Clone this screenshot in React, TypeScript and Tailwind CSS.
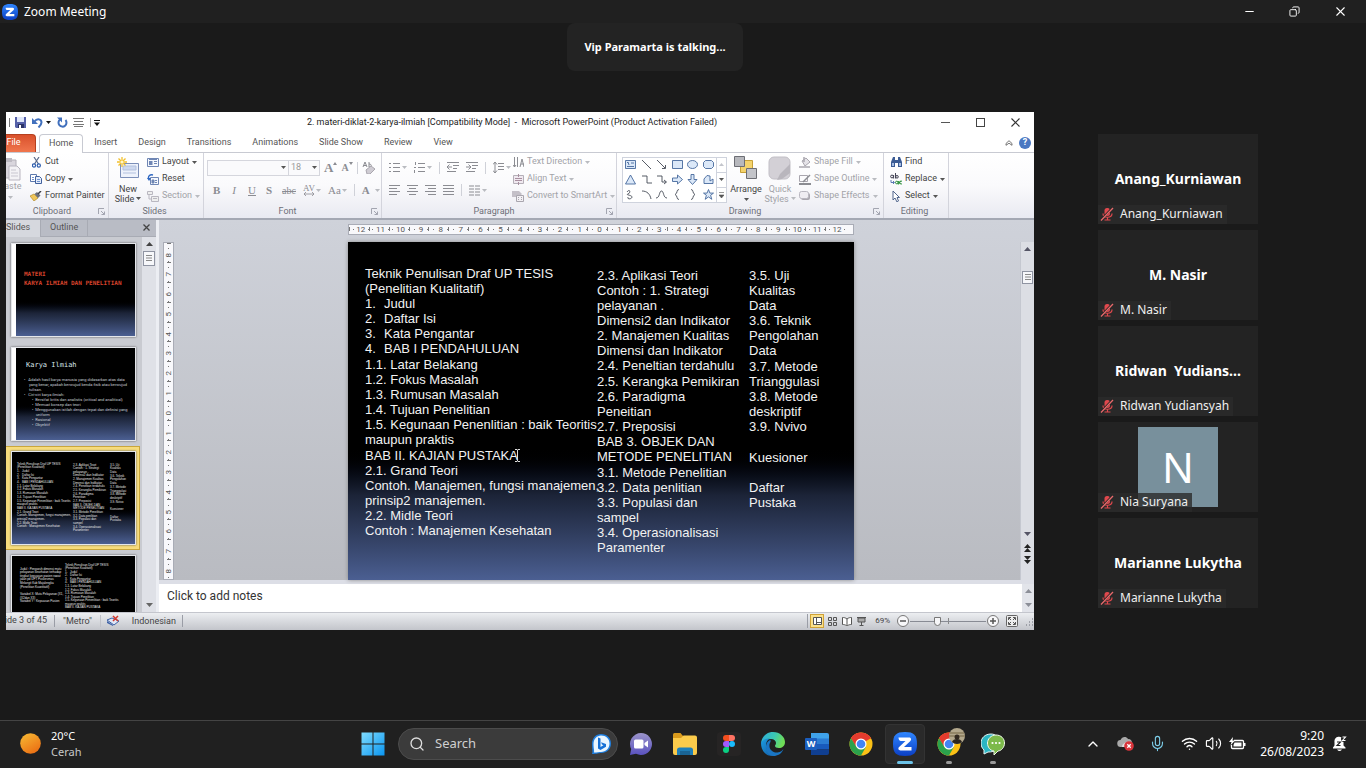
import React from 'react';
import { ChevronUp, Minus, X, Copy as Restore, Search, Wifi, Volume2, Mic } from 'lucide-react';

type Kids = { children?: React.ReactNode };

function Svg({ w, h, vb, className = '', children }: Kids & { w: number; h: number; vb?: string; className?: string }) {
  return (
    <svg width={w} height={h} viewBox={vb ?? `0 0 ${w} ${h}`} fill="none" className={`shrink-0 ${className}`} aria-hidden="true">
      {children}
    </svg>
  );
}

function Caret({ dim = false }: { dim?: boolean }) {
  return (
    <Svg w={5} h={3}>
      <path d="M0 0h5L2.500 3z" fill={dim ? '#b9bbc0' : '#555'} />
    </Svg>
  );
}

const VSep = () => <span className="h-3 w-px shrink-0 bg-[#cfd1d8]" />;

/* ---------- Zoom window ---------- */

function ZoomLogo({ size }: { size: number }) {
  return (
    <Svg w={size} h={size} vb="0 0 24 24">
      <defs>
        <linearGradient id="zg" x1="0" y1="0" x2="0" y2="1">
          <stop offset="0" stopColor="#2f86ff" />
          <stop offset="1" stopColor="#0b3fc4" />
        </linearGradient>
      </defs>
      <path d="M12 0c9 0 12 3 12 12s-3 12-12 12S0 21 0 12 3 0 12 0z" fill="url(#zg)" />
      <path d="M5.500 5.500H16c2 0 2.800 2 1.400 3.400L11 15h7.500v3.500H7.500c-2 0-2.800-2-1.400-3.400L12.500 9H8C6.500 9 5.500 7.500 5.500 5.500z" fill="#fff" />
    </Svg>
  );
}

function MutedMic() {
  return (
    <Svg w={14} h={14}>
      <rect x="4.500" y="1" width="5.500" height="8" rx="2.500" fill="#e0484d" />
      <path d="M3 6.500c0 5 9 5 9 0M7.500 10.500v2.500M4.500 13h6" stroke="#e0484d" strokeWidth="1.200" />
      <path d="M1 13L12.500 1" stroke="#232323" strokeWidth="2.400" />
      <path d="M1 13.500L13 1" stroke="#e86a6c" strokeWidth="1.300" />
    </Svg>
  );
}

const people = [
  { title: 'Anang_Kurniawan', label: 'Anang_Kurniawan' },
  { title: 'M. Nasir', label: 'M. Nasir' },
  { title: 'Ridwan  Yudians...', label: 'Ridwan Yudiansyah' },
  { title: 'N', label: 'Nia Suryana', avatar: true },
  { title: 'Marianne Lukytha', label: 'Marianne Lukytha' },
];

function Participants() {
  return (
    <ul className="flex w-40 flex-col gap-1.5">
      {people.map((p) => (
        <li key={p.label} className="relative flex h-[90px] items-center justify-center bg-[#232323] text-white">
          {p.avatar ? (
            <span className="flex size-20 items-center justify-center bg-[#78909c] text-[42px]">{p.title}</span>
          ) : (
            <span className="whitespace-pre text-sm font-bold">{p.title}</span>
          )}
          <span className="absolute bottom-0 left-0 flex h-[19px] items-center gap-1.5 bg-[#2b2b2b]/80 pl-0.5 pr-1 text-xs text-[#f0f0f0]">
            <MutedMic />
            {p.label}
          </span>
        </li>
      ))}
    </ul>
  );
}

/* ---------- PowerPoint: title and tabs ---------- */

function TitleRow() {
  return (
    <div className="grid h-[22px] grid-cols-[1fr_auto_1fr] items-center bg-white">
      <div className="flex items-center pl-[3px]">
        <span className="h-[9px] w-px bg-[#777]" />
        <button aria-label="Save" className="ml-[5px]">
          <Svg w={11} h={11}>
            <path d="M0 0h11v11H1L0 10z" fill="#5560a8" />
            <path d="M2 0h7v5H2z" fill="#dfe6f8" />
            <path d="M3 7h6v4H3z" fill="#2b3264" />
            <path d="M4 8h2v3H4z" fill="#fff" />
          </Svg>
        </button>
        <button aria-label="Undo" className="ml-[6px]">
          <Svg w={11} h={11}>
            <path d="M2.500 4.500C5 1 9.500 2 9.500 5.500c0 2-1.500 3.500-3 5" stroke="#4170bd" strokeWidth="2" />
            <path d="M0 1v6h6z" fill="#4170bd" />
          </Svg>
        </button>
        <button aria-label="Undo history" className="ml-[3px]"><Svg w={5} h={3}><path d="M0 0h5L2.500 3z" fill="#111" /></Svg></button>
        <button aria-label="Redo" className="ml-[6px]">
          <Svg w={11} h={11}>
            <path d="M3 2.500a4 4 0 1 0 5.500.5" stroke="#4170bd" strokeWidth="2" />
            <path d="M0 0.500h5v5z" fill="#4170bd" />
          </Svg>
        </button>
        <button aria-label="Align" className="ml-[5px]">
          <Svg w={11} h={9}><path d="M0 .5h11M1 3.500h9M0 6.500h11M1 8.500h9" stroke="#777" /></Svg>
        </button>
        <span className="ml-1.5 h-[9px] w-px bg-[#aaa]" />
        <button aria-label="Customize toolbar" className="ml-[3px]">
          <Svg w={6} h={6}><path d="M0 .5h6" stroke="#111" /><path d="M0 2.500h6L3 6z" fill="#111" /></Svg>
        </button>
      </div>
      <h1 className="whitespace-pre pr-4 text-[9px] text-[#222]">2. materi-diklat-2-karya-ilmiah [Compatibility Mode]  -  Microsoft PowerPoint (Product Activation Failed)</h1>
      <div className="flex items-center justify-end gap-[26px] pr-3.5 text-[#333]">
        <button aria-label="Minimize"><Svg w={9} h={9}><path d="M0 4.500h9" stroke="#555" /></Svg></button>
        <button aria-label="Maximize"><Svg w={9} h={9}><rect x=".5" y=".5" width="8" height="8" stroke="#444" /></Svg></button>
        <button aria-label="Close"><Svg w={9} h={9}><path d="M.5.500l8 8M8.500.500l-8 8" stroke="#333" strokeWidth="1.100" /></Svg></button>
      </div>
    </div>
  );
}

function TabRow() {
  const tabs = ['Insert', 'Design', 'Transitions', 'Animations', 'Slide Show', 'Review', 'View'];
  return (
    <nav className="flex h-[19px] items-stretch gap-px border-b border-[#c8cad2] bg-white text-[9px] text-[#555]">
      <button className="w-[30px] rounded-tr-sm border-r border-t border-[#b5401f] bg-linear-to-b from-[#d9502b] to-[#f0764d] pr-3.5 text-white">File</button>
      <button className="z-10 -mb-px ml-0.5 rounded-t-sm border border-b-0 border-[#c8cad2] bg-white px-[9px]">Home</button>
      {tabs.map((t) => (
        <button key={t} className="px-[10px] pt-px">{t}</button>
      ))}
      <div className="ml-auto flex items-center gap-1.5 pr-[3px]">
        <button aria-label="Minimize ribbon">
          <Svg w={8} h={6}><path d="M1 3.500L4 .7l3 2.800v1.800L4 3.200 1 5.300z" stroke="#555" strokeWidth=".8" /></Svg>
        </button>
        <button aria-label="Help" className="flex size-3 items-center justify-center rounded-full bg-[#4a78c2] text-[9px] font-bold text-white">?</button>
      </div>
    </nav>
  );
}

/* ---------- PowerPoint: ribbon ---------- */

function Group({ label, width, launcher = false, children }: Kids & { label: string; width: string; launcher?: boolean }) {
  return (
    <section className={`flex shrink-0 flex-col border-r border-[#d3d4dc] ${width}`}>
      <div className="flex h-[53px] min-w-0">{children}</div>
      <div className="flex h-3 items-center pr-[3px] text-[9px] text-[#6d6f78]">
        <h2 className="flex-1 text-center">{label}</h2>
        {launcher && (
          <button aria-label={`${label} options`}>
            <Svg w={7} h={7}><path d="M.5 6V.5H6M3 3l3.500 3.500M6.500 3.500v3h-3" stroke="#a3a5b0" /></Svg>
          </button>
        )}
      </div>
    </section>
  );
}

function Item({ icon, text, caret = false, dim = false }: { icon: React.ReactNode; text: string; caret?: boolean; dim?: boolean }) {
  return (
    <button className={`flex h-[17px] items-center gap-[3px] whitespace-nowrap pt-0.5 ${dim ? 'text-[#a2a3a8]' : 'text-[#444]'}`}>
      <span className="flex w-3 justify-center">{icon}</span>
      {text}
      {caret && <Caret dim={dim} />}
    </button>
  );
}

const Lines = ({ d, w = 11, h = 11 }: { d: string; w?: number; h?: number }) => (
  <Svg w={w} h={h}><path d={d} stroke="#8b8c92" /></Svg>
);

function ToolBtn({ label, caret = false, children }: Kids & { label: string; caret?: boolean }) {
  return (
    <button aria-label={label} className="flex items-center gap-0.5 text-[#8b8c92]">
      {children}
      {caret && <Caret dim />}
    </button>
  );
}

function ClipboardGroup() {
  return (
    <Group label="Clipboard" width="w-[103px]" launcher>
      <div className="w-[26px] overflow-hidden text-[#a2a3a8]">
        <button className="-ml-2 flex w-6 flex-col items-center pt-1">
          <Svg w={22} h={24}>
            <path d="M3 3h14v18H3z" fill="#d9d6dd" stroke="#b3b0b8" />
            <path d="M7 1h6v4H7z" fill="#bdbac2" />
            <path d="M10 9h8l3 3v11H10z" fill="#f3f2f5" stroke="#b9b6c0" />
            <path d="M12 13h5M12 16h7M12 19h7" stroke="#c9c7d0" />
          </Svg>
          <span className="leading-[11px]">Paste</span>
          <span className="py-1"><Caret dim /></span>
        </button>
      </div>
      <div className="-ml-0.5 flex flex-col">
        <Item text="Cut" icon={<Svg w={9} h={11}><path d="M2 0l4.500 7M7 0L2.500 7" stroke="#5a6b8c" strokeWidth="1.200" /><circle cx="2" cy="8.500" r="1.600" stroke="#2f5faf" strokeWidth="1.200" /><circle cx="6.800" cy="8.500" r="1.600" stroke="#2f5faf" strokeWidth="1.200" /></Svg>} />
        <Item text="Copy" caret icon={<Svg w={12} h={10}><path d="M.5.500h6v7h-6z" fill="#fff" stroke="#5c78ad" /><path d="M5.500 2.500h4l2 2v5h-6z" fill="#e4ecfa" stroke="#41619d" /><path d="M7 5.500h3M7 7.500h3M2 3.500h2M2 5.500h2" stroke="#6f92cf" /></Svg>} />
        <Item text="Format Painter" icon={<Svg w={12} h={10}><path d="M0 5l4-2 4 4-4 3z" fill="#f0c65a" stroke="#b28a2b" strokeWidth=".7" /><path d="M4.500 3L7 1l3.500 3.500L8 7z" fill="#6b6f7c" /><path d="M8 3l3-3" stroke="#3c3f48" strokeWidth="1.500" /></Svg>} />
      </div>
    </Group>
  );
}

function SlidesGroup() {
  const page = (c: string) => (
    <Svg w={12} h={11}><path d="M.5 1.500h11v8H.5z" fill="#f5f8fd" stroke={c} /><path d="M2 4h3.500v4H2z" fill={c} /><path d="M7 4.500h3M7 6.500h3M2 2.500h8" stroke={c} /></Svg>
  );
  return (
    <Group label="Slides" width="w-[95px]">
      <button className="flex w-[38px] flex-col items-center pt-1 leading-[10px] text-[#444]">
        <Svg w={24} h={23}>
          <path d="M4.500 6.500h18v14h-18z" fill="#eef2fb" stroke="#7c8fb8" />
          <path d="M7 9h13v4H7zM7 16h13" fill="#cdd8ee" stroke="#b3c1de" />
          <path d="M6 0v10M1 5h10M2.500 1.500l7 7M9.500 1.500l-7 7" stroke="#f2c02e" strokeWidth="1.300" />
          <circle cx="6" cy="5" r="1.600" fill="#fff6c8" />
        </Svg>
        <span className="pt-1">New</span>
        <span className="flex items-center gap-0.5">Slide <Caret /></span>
      </button>
      <div className="flex flex-col">
        <Item text="Layout" caret icon={page('#6f86b4')} />
        <Item text="Reset" icon={<Svg w={12} h={11}><path d="M3.500 3.500h8v7h-8z" fill="#f5f8fd" stroke="#6f86b4" /><path d="M5 6h2v3H5zM8 6.500h2M8 8.500h2" fill="#6f86b4" stroke="#6f86b4" /><path d="M6 1C3 0 1 2 1.500 5" stroke="#2f68c2" strokeWidth="1.400" /><path d="M0 4h4L2 7z" fill="#2f68c2" /></Svg>} />
        <Item text="Section" caret dim icon={<Svg w={12} h={11}><path d="M.5.500h5v3h-5zM4.500 5.500h7v5h-7z" fill="#eee" stroke="#b9b7c0" /><path d="M2 4v4h2M6 7.500h4" stroke="#b9b7c0" /></Svg>} />
      </div>
    </Group>
  );
}

function FontGroup() {
  return (
    <Group label="Font" width="w-[178px]" launcher>
      <div className="flex flex-1 flex-col gap-[7px] pl-[3px] pt-[7px] text-[#8b8c92]">
        <div className="flex h-4 items-center gap-1">
          <div className="flex h-4">
            <label className="relative flex items-center">
              <select aria-label="Font name" className="h-4 w-[82px] appearance-none border border-[#d5d6dd] bg-[#fafafc]"><option> </option></select>
              <span className="pointer-events-none absolute right-[3px]"><Caret /></span>
            </label>
            <label className="relative -ml-px flex items-center">
              <select aria-label="Font size" className="h-4 w-8 appearance-none border border-[#d5d6dd] bg-[#fafafc] pl-0.5 text-[9px] text-[#999]"><option>18</option></select>
              <span className="pointer-events-none absolute right-[3px]"><Caret /></span>
            </label>
          </div>
          <ToolBtn label="Grow font"><span className="-mr-0.5 font-['Liberation_Serif'] text-[13px] font-bold leading-4">A</span><Svg w={4} h={12}><path d="M0 3h4L2 0z" fill="#8b8c92" /></Svg></ToolBtn>
          <ToolBtn label="Shrink font"><span className="-mr-0.5 font-['Liberation_Serif'] text-[10px] font-bold leading-4">A</span><Svg w={4} h={12}><path d="M0 0h4L2 3z" fill="#8b8c92" /></Svg></ToolBtn>
          <VSep />
          <ToolBtn label="Clear formatting"><Svg w={13} h={13}><path d="M1 6l2-5 2 5M1.500 4.500h3M7 1v5c3 0 3-3 0-3" stroke="#8b8c92" /><path d="M4 9l5-4 4 3-5 5H5z" fill="#cfccd3" stroke="#a9a6ae" /></Svg></ToolBtn>
        </div>
        <div className="flex h-[15px] items-center gap-[7px] pl-1.5 font-['Liberation_Serif'] text-[11px]">
          <div className="flex items-center gap-[10px]">
            <button className="font-bold">B</button>
            <button className="pl-0.5 italic">I</button>
            <button className="pl-0.5 underline">U</button>
            <button className="font-bold">S</button>
            <button className="text-[10px] line-through">abc</button>
          </div>
          <button className="flex items-center gap-px text-[9px]"><span className="flex flex-col items-center leading-[8px]">AV<Svg w={12} h={4}><path d="M1 2h10M3 0L1 2l2 2M9 0l2 2-2 2" stroke="#8b8c92" strokeWidth=".8" /></Svg></span><Caret dim /></button>
          <button className="flex items-center gap-px">Aa<Caret dim /></button>
          <VSep />
          <button className="flex items-center gap-[5px] font-bold">A<Caret dim /></button>
        </div>
      </div>
    </Group>
  );
}

function ParagraphGroup() {
  return (
    <Group label="Paragraph" width="w-[235px]" launcher>
      <div className="flex w-[130px] flex-col gap-[7px] pl-[7px] pt-[7px]">
        <div className="flex h-4 items-center gap-[7px]">
          <ToolBtn label="Bullets" caret><Lines d="M4 1.500h7M4 5.500h7M4 9.500h7M0 1.500h2M0 5.500h2M0 9.500h2" /></ToolBtn>
          <ToolBtn label="Numbering" caret><Lines d="M4 1.500h7M4 5.500h7M4 9.500h7M1.500 0v3M0 5.500h2M.5 8v3" /></ToolBtn>
          <VSep />
          <ToolBtn label="Decrease indent"><Lines w={12} d="M0 .5h12M6 3.500h6M6 6.500h4M0 9.500h9M5 5H0M2.500 2.500L0 5l2.500 2.500" /></ToolBtn>
          <ToolBtn label="Increase indent"><Lines w={12} d="M0 .5h12M6 3.500h6M6 6.500h4M0 9.500h9M0 5h5M2.500 2.500L5 5 2.500 7.500" /></ToolBtn>
          <VSep />
          <ToolBtn label="Line spacing" caret><Lines w={11} d="M5 1.500h6M5 4.500h6M5 7.500h6M2 0v11M0 2.500L2 0l2 2.500M0 8.500L2 11l2-2.500" /></ToolBtn>
        </div>
        <div className="flex h-[15px] items-center gap-[7px]">
          <ToolBtn label="Align left"><Lines d="M0 .5h11M0 3.500h8M0 6.500h11M0 9.500h8" /></ToolBtn>
          <ToolBtn label="Center"><Lines d="M0 .5h11M2 3.500h7M0 6.500h11M2 9.500h7" /></ToolBtn>
          <ToolBtn label="Align right"><Lines d="M0 .5h11M3 3.500h8M0 6.500h11M3 9.500h8" /></ToolBtn>
          <ToolBtn label="Justify"><Lines d="M0 .5h11M0 3.500h11M0 6.500h11M0 9.500h11" /></ToolBtn>
          <VSep />
          <ToolBtn label="Columns" caret><Lines d="M0 1h5M6 1h5M0 4h5M6 4h5M0 7h5M6 7h5M0 10h5M6 10h5" /></ToolBtn>
        </div>
      </div>
      <div className="flex flex-col">
        <Item text="Text Direction" caret dim icon={<Lines d="M1.500 0v10M4.500 0v10M7 10l2-8 2 8M8 7h3M0 8l1.500 2L3 8" />} />
        <Item text="Align Text" caret dim icon={<Svg w={11} h={11}><path d="M.5 1.500h10v8H.5z" fill="#f0e9f0" stroke="#b5b0b8" /><path d="M2 4.500h7M2 6.500h7M5.500 0v3M5.500 8v3" stroke="#a88fa0" /></Svg>} />
        <Item text="Convert to SmartArt" caret dim icon={<Svg w={12} h={11}><path d="M0 0h7l3 3-3 3H0z" fill="#c4c0c8" /><path d="M4.500 4.500h7v6h-7z" fill="#f2f0f4" stroke="#a9a6ae" /><path d="M6 6.500h1M9 6.500h1M6 8.500h1M9 8.500h1" stroke="#a9a6ae" /></Svg>} />
      </div>
    </Group>
  );
}

const shapePaths = [
  'M.5 1.500h10v8H.5zM2 4l1-1 1 3M6 4h3M2 7.500h7',
  'M1 1l9 9',
  'M1 1l8 8M6 9.500h3.500V6',
  'M.5 1.500h10v8H.5z',
  'M.5 5.500a5 4 0 1 0 10 0a5 4 0 1 0-10 0',
  'M2.500 1.500h6l2 2v4l-2 2h-6l-2-2v-4z',
  'M5.500 1l5 9H.5z',
  'M1 2h5v7h5',
  'M1 2h5v6h4M8 6l2.500 2L8 10',
  'M.5 4h5V1l5 4.500-5 4.500V7.500h-5z',
  'M4 .5h3v5h3l-4.500 5L1 5.500h3z',
  'M1 9.500h9V5L7 7V2L4 1.500 1 5z',
  'M2 3c3-4 4 1 1 2s4 1 4 3-5 3-4 0',
  'M1 2c5 0 8 3 9 8',
  'M0 9C4 9 3 2 5.500 2S7 9 11 9',
  'M7 .5c-3 0-1 4-4 5 3 1 1 5 4 5',
  'M4 .5c3 0 1 4 4 5-3 1-1 5-4 5',
  'M5.500.500l1.400 3.600h3.600L7.600 6.300l1.200 4-3.300-2.400-3.300 2.400 1.200-4L.5 4.100h3.600z',
];
const filledShapes = [0, 3, 4, 5, 6, 9, 10, 11, 17];

function DrawingGroup() {
  return (
    <Group label="Drawing" width="w-[267px]" launcher>
      <div className="ml-[5px] mt-1 flex h-[46px] w-[105px] shrink-0 border border-[#cfd3dd] bg-white">
        <div className="grid flex-1 grid-cols-6 place-items-center">
          {shapePaths.map((d, i) => (
            <button key={d} aria-label={`Shape ${i + 1}`}>
              <Svg w={11} h={11}><path d={d} stroke={filledShapes.includes(i) ? '#46699c' : '#444a55'} strokeWidth=".9" fill={filledShapes.includes(i) ? '#dbe8f8' : 'none'} /></Svg>
            </button>
          ))}
        </div>
        <div className="flex w-2.5 flex-col divide-y divide-[#cfd3dd] border-l border-[#cfd3dd]">
          <button aria-label="Previous shapes" className="flex flex-1 items-center justify-center"><Svg w={5} h={3}><path d="M0 3h5L2.500 0z" fill="#c3c5cc" /></Svg></button>
          <button aria-label="More shapes below" className="flex flex-1 items-center justify-center"><Caret /></button>
          <button aria-label="All shapes" className="flex flex-1 items-center justify-center"><Svg w={5} h={6}><path d="M0 .5h5M0 3h5L2.500 6z" stroke="#555" strokeWidth=".6" fill="#555" /></Svg></button>
        </div>
      </div>
      <button className="flex w-[38px] shrink-0 flex-col items-center pt-[3px] leading-[10px] text-[#444]">
        <Svg w={24} h={24}>
          <path d="M6.500 4.500h12v12h-12z" fill="#f4d36c" stroke="#c7a036" />
          <path d="M.5.500h10v10H.5z" fill="#b7b8bd" stroke="#6c6d74" />
          <path d="M12.500 12.500h10v10h-10z" fill="#c3c4c9" stroke="#6c6d74" />
        </Svg>
        <span className="pb-1 pt-1">Arrange</span>
        <Caret />
      </button>
      <button className="flex w-[30px] shrink-0 flex-col items-center pt-[3px] leading-[10px] text-[#a2a3a8]">
        <Svg w={24} h={24}>
          <rect x="1" y="1" width="21" height="22" rx="5" fill="#d3d0d6" stroke="#c2bfc6" />
          <path d="M9 24l3-6L22 8v9l-8 6z" fill="#b9b6bd" />
        </Svg>
        <span className="pt-1">Quick</span>
        <span className="flex items-center gap-0.5">Styles <Caret dim /></span>
      </button>
      <div className="ml-1 flex flex-col">
        <Item text="Shape Fill" caret dim icon={<Svg w={12} h={11}><path d="M3 4l4-3 4 4-5 4z" fill="#e5e3e8" stroke="#a9a6ae" /><path d="M5 5V0M0 10h11" stroke="#a9a6ae" strokeWidth="1.500" /></Svg>} />
        <Item text="Shape Outline" caret dim icon={<Svg w={12} h={11}><path d="M.5 1.500h8v6h-8z" stroke="#a9a6ae" /><path d="M0 10h12" stroke="#8b8c92" strokeWidth="2" /><path d="M4 8l7-7" stroke="#8b8c92" strokeWidth="1.500" /></Svg>} />
        <Item text="Shape Effects" caret dim icon={<Svg w={12} h={10}><rect x="2" y="2" width="9" height="7" rx="2" fill="#a9a6ae" /><rect x=".5" y=".5" width="9" height="7" rx="2" fill="#efedf2" stroke="#b9b7c0" /></Svg>} />
      </div>
    </Group>
  );
}

function EditingGroup() {
  return (
    <Group label="Editing" width="w-[65px]">
      <div className="flex flex-col pl-1.5">
        <Item text="Find" icon={<Svg w={11} h={10}><path d="M0 5l2-5h2v10H0zM7 0h2l2 5v5H7zM4 3h3v3H4z" fill="#3b5b94" /><path d="M1 6h2v3H1zM8 6h2v3H8z" fill="#a6bde4" /></Svg>} />
        <Item
          text="Replace"
          caret
          icon={
            <Svg w={12} h={12}>
              <circle cx="2" cy="3.500" r="1.400" stroke="#445" /><path d="M3.600 2v3.500M5.500 0v5.500" stroke="#445" /><circle cx="7" cy="3.800" r="1.300" stroke="#445" />
              <path d="M1 7v2.500h3M3 8l1.500 1.500L3 11" stroke="#5a78b4" />
              <circle cx="6.800" cy="9.500" r="1.300" stroke="#2d8f3c" /><path d="M8.300 8v3.500M11.800 8.300c-3-.8-3 3.200 0 2.600" stroke="#2d8f3c" strokeWidth="1.200" />
            </Svg>
          }
        />
        <Item text="Select" caret icon={<Svg w={8} h={11}><path d="M1 0v9l2-2 2 4 1.500-1L5 6.500h2.500z" fill="#fff" stroke="#51658c" /></Svg>} />
      </div>
    </Group>
  );
}

function Ribbon() {
  return (
    <div className="flex h-[67px] border-b-2 border-[#a4a8b3] bg-linear-to-b from-white via-[#fafafc] to-[#e9eaf1] text-[9px]">
      <ClipboardGroup />
      <SlidesGroup />
      <FontGroup />
      <ParagraphGroup />
      <DrawingGroup />
      <EditingGroup />
    </div>
  );
}

/* ---------- PowerPoint: slides ---------- */

const colA = [
  'Teknik Penulisan Draf UP TESIS', '(Penelitian Kualitatif)', '1.|Judul', '2.|Daftar Isi', '3.|Kata Pengantar', '4.|BAB I PENDAHULUAN',
  '1.1. Latar Belakang', '1.2. Fokus Masalah', '1.3. Rumusan Masalah', '1.4. Tujuan Penelitian', '1.5. Kegunaan Penenlitian : baik Teoritis',
  'maupun praktis', 'BAB II. KAJIAN PUSTAKA', '2.1. Grand Teori', 'Contoh. Manajemen, fungsi manajemen,', 'prinsip2 manajemen.', '2.2. Midle Teori',
  'Contoh : Manajemen Kesehatan',
];
const colB = [
  '2.3. Aplikasi Teori', 'Contoh : 1. Strategi', 'pelayanan .', 'Dimensi2 dan Indikator', '2. Manajemen Kualitas', 'Dimensi dan Indikator',
  '2.4. Peneltian terdahulu', '2.5. Kerangka Pemikiran', '2.6. Paradigma', 'Peneitian', '2.7. Preposisi', 'BAB 3. OBJEK DAN', 'METODE PENELITIAN',
  '3.1. Metode Penelitian', '3.2. Data penlitian', '3.3. Populasi dan', 'sampel', '3.4. Operasionalisasi', 'Paramenter',
];
const colC = ['3.5. Uji', 'Kualitas', 'Data', '3.6. Teknik', 'Pengolahan', 'Data', '3.7. Metode', 'Trianggulasi', '3.8. Metode', 'deskriptif', '3.9. Nvivo', '', 'Kuesioner', '', 'Daftar', 'Pustaka'];
const colD = [
  'Judul : Pengaruh dimensi mutu', 'pelayanan kesehatan terhadap', 'tingkat kepuasan pasien rawat', 'jalan pd UPT Puskesmas', 'Melangit Kab Majalengka', '(Penelitian Kuantitatif)', '',
  'Variabel X: Mutu Pelayanan (X1,', '(X2dan X3)', 'Variabel Y : Kepuasan Pasien',
];

function Col({ lines, className, tab }: { lines: string[]; className: string; tab: string }) {
  return (
    <div className={`flex flex-col justify-between whitespace-pre ${className}`}>
      {lines.map((l, i) => {
        const [a, b] = l.split('|');
        return (
          <p key={i} className="flex">
            {b ? <><span className={tab}>{a}</span>{b}</> : a || '\u00a0'}
          </p>
        );
      })}
    </div>
  );
}

const slideBg = 'bg-linear-to-b from-black from-60% via-[#1c2438] via-75% to-[#4b5f92]';

function MainSlide() {
  return (
    <article className={`relative flex w-[506px] overflow-hidden pl-[17px] font-['Liberation_Sans'] text-[13px] leading-[15px] text-[#f2f2f2] shadow-[0_0_4px_#888] ${slideBg}`}>
      <Col lines={colA} className="mt-[24px] h-[273px] w-[232px]" tab="w-[19px]" />
      <Col lines={colB} className="mt-[26px] h-[288px] w-[152px]" tab="" />
      <Col lines={colC} className="mt-[26px] h-[243px] w-[100px]" tab="" />
      <span className="absolute left-[166px] top-[207px]">
        <Svg w={7} h={13}><path d="M1 .5h2l.5.500.5-.5h2M3.500 1v11M1 12.500h2l.5-.5.500.5h2" stroke="#ddd" /></Svg>
      </span>
    </article>
  );
}

function ThumbFrame({ children, selected = false, light = false }: Kids & { selected?: boolean; light?: boolean }) {
  return (
    <button className={`flex w-[134px] flex-col py-1 pl-[5px] pr-[3px] text-left ${selected ? 'border border-l-0 border-[#c9a63c] bg-[#f7dc7c]' : 'border border-l-0 border-transparent'}`}>
      <span className={`flex h-[94px] w-full border border-[#e4e6ea] shadow-[0_0_2px_#555] ${light ? 'bg-white pl-1' : ''}`}>
        <span className={`block flex-1 overflow-hidden ${slideBg}`}>{children}</span>
      </span>
    </button>
  );
}

const MiniCol = ({ lines, className }: { lines: string[]; className: string }) => (
  <Col lines={lines} className={`text-[3px] leading-[3px] text-[#e4e4e4] ${className}`} tab="w-[5px]" />
);

function SlidesPane() {
  return (
    <aside className="flex w-[150px] shrink-0 flex-col bg-[#c9cbd1] text-[9px] text-[#555]">
      <div className="flex h-[17px] shrink-0 border-b border-[#a8abb4] bg-[#b9bcc5]">
        <button className="-mb-px w-[34px] bg-[#d6d8de] pr-3">Slides</button>
        <button className="border-x border-[#a8abb4] px-[9px]">Outline</button>
        <button aria-label="Close pane" className="ml-auto pr-1.5"><Svg w={7} h={7}><path d="M.5.500l6 6M6.500.500l-6 6" stroke="#444" strokeWidth="1.300" /></Svg></button>
      </div>
      <div className="flex min-h-0 flex-1">
        <div className="flex w-[134px] flex-col overflow-hidden pt-px">
          <ThumbFrame light>
            <span className="block pl-2 pt-[25px] font-['DejaVu_Sans_Mono'] text-[6px] font-bold leading-[9px] text-[#d8432c]">MATERI<br /><span className="whitespace-nowrap">KARYA ILMIAH DAN PENELITIAN</span></span>
          </ThumbFrame>
          <ThumbFrame light>
            <span className="block pl-2.5 pt-[13px] font-['DejaVu_Sans_Mono'] text-[7px] leading-[9px] text-[#d6e4ea]">Karya Ilmiah</span>
            <span className="mt-[7px] block whitespace-pre pl-2 text-[4px] leading-[5px] text-[#c8ccd4]">
              {'•   Adalah hasil karya manusia yang didasarkan atas data\n     yang benar, apakah berwujud benda fisik atau berwujud\n     tulisan.\n•   Ciri-ciri karya ilmiah:\n        •  Bersifat kritis dan analistis (critical and analitical)\n        •  Memuat konsep dan teori\n        •  Menggunakan istilah dengan tepat dan definisi yang\n            uniform\n        •  Rasional\n        •  Obyektif'}
            </span>
          </ThumbFrame>
          <ThumbFrame selected>
            <span className="flex pl-[5px] pt-[11px] font-['Liberation_Sans']">
              <MiniCol lines={colA} className="h-[66px] w-14" />
              <MiniCol lines={colB} className="mt-px h-[69px] w-[37px]" />
              <MiniCol lines={colC} className="mt-px h-[59px] w-5" />
            </span>
          </ThumbFrame>
          <ThumbFrame>
            <span className="flex pl-2 pt-2 font-['Liberation_Sans']">
              <MiniCol lines={colD} className="mt-1 h-9 w-[45px]" />
              <MiniCol lines={colA.slice(0, 13)} className="h-[46px] w-14" />
            </span>
          </ThumbFrame>
        </div>
        <div className="ml-auto flex w-3.5 flex-col items-center bg-[#dfe1e7] py-[5px]">
          <Svg w={7} h={4}><path d="M0 4h7L3.500 0z" fill="#444" /></Svg>
          <span className="mt-[5px] flex h-[15px] w-3 items-center justify-center border border-[#8f94a2] bg-[#f6f7fa]"><Svg w={6} h={6}><path d="M0 .5h6M0 3h6M0 5.500h6" stroke="#888" /></Svg></span>
          <span className="flex-1" />
          <Svg w={7} h={4}><path d="M0 0h7L3.500 4z" fill="#666" /></Svg>
        </div>
      </div>
    </aside>
  );
}

function Ruler({ max, vertical = false }: { max: number; vertical?: boolean }) {
  const marks = Array.from({ length: max * 2 + 1 }, (_, i) => Math.abs(i - max));
  return (
    <div className={`flex border border-[#a9acb6] bg-[#f8f8fb] text-[8px] leading-[9px] text-[#555] ${vertical ? 'w-[11px] flex-col' : 'h-[11px] pr-2'}`}>
      {marks.map((m, i) => (
        <span key={i} className={`flex flex-1 items-center justify-between overflow-hidden ${vertical ? 'flex-col' : ''}`}>
          <i className={vertical ? 'h-px w-1 bg-[#777]' : 'h-1 w-px bg-[#777]'} />
          <i className="size-px bg-[#777]" />
          <span className={vertical ? 'rotate-180 [writing-mode:vertical-rl]' : ''}>{m}</span>
          <i className="size-px bg-[#777]" />
        </span>
      ))}
    </div>
  );
}

function Editor() {
  return (
    <div className="flex min-w-0 flex-1 flex-col border-l-[3px] border-[#eceef3]">
      <div className="flex min-h-0 flex-1 bg-linear-to-b from-[#cfd2da] to-[#b9bbc1]">
        <div className="flex flex-1 gap-[174px] pl-[4px]">
          <div className="flex pt-[22px]"><Ruler max={8} vertical /></div>
          <div className="flex w-[506px] flex-col">
            <div className="pb-[7px] pt-1"><Ruler max={12} /></div>
            <div className="flex flex-1"><MainSlide /></div>
          </div>
        </div>
        <div className="mt-[22px] flex w-3.5 flex-col items-center border-l border-[#c5c8d0] bg-[#dcdee4] pb-4 pt-[5px]">
          <Svg w={7} h={4}><path d="M0 4h7L3.500 0z" fill="#556" /></Svg>
          <span className="mt-5 flex h-[13px] w-[11px] items-center justify-center border border-[#8f94a2] bg-[#f6f7fa]"><Svg w={6} h={6}><path d="M0 .5h6M0 3h6M0 5.500h6" stroke="#888" /></Svg></span>
          <span className="flex-1" />
          <Svg w={7} h={4}><path d="M0 0h7L3.500 4z" fill="#556" /></Svg>
          <Svg w={7} h={8} className="mt-2"><path d="M0 4h7L3.500 0zM0 8h7L3.500 4z" fill="#222" /></Svg>
          <Svg w={7} h={8} className="mt-1"><path d="M0 0h7L3.500 4zM0 4h7L3.500 8z" fill="#222" /></Svg>
        </div>
      </div>
      <div className="flex h-8 border-t-4 border-[#dcdee6] bg-white">
        <textarea aria-label="Notes" placeholder="Click to add notes" className="min-w-0 flex-1 resize-none px-2 pt-1 text-xs leading-4 placeholder:text-[#333]" />
        <div className="flex w-3 flex-col items-center justify-between bg-[#e2e4ea] py-[5px]">
          <Svg w={7} h={4}><path d="M0 4h7L3.500 0z" fill="#8c8f98" /></Svg>
          <Svg w={7} h={4}><path d="M0 0h7L3.500 4z" fill="#8c8f98" /></Svg>
        </div>
      </div>
    </div>
  );
}

function StatusBar() {
  return (
    <footer className="flex h-[18px] items-center border-t border-[#c4c6cd] bg-linear-to-b from-[#eceef1] to-[#c3c5cb] text-[9px] text-[#444]">
      <span className="flex h-3 w-[49px] items-center justify-end overflow-hidden whitespace-nowrap border-r border-[#9a9da6] pr-[7px]">Slide 3 of 45</span>
      <span className="h-3 border-r border-[#c0c2c9] px-2 leading-3">&quot;Metro&quot;</span>
      <button aria-label="Proofing" className="px-1.5">
        <Svg w={13} h={12}><path d="M0 5l5-2 7 3-5 4z" fill="#dfe7f6" stroke="#3e62a8" /><path d="M0 6l6 4v1L0 8z" fill="#3e62a8" /><path d="M6 1l5 5M11 1L6 6" stroke="#d1382d" strokeWidth="1.500" /></Svg>
      </button>
      <button className="h-3 border-r border-[#9a9da6] px-[6px] leading-3">Indonesian</button>
      <div className="ml-auto flex items-center border-l border-[#9a9da6] pl-0.5">
        <button aria-label="Normal view" className="flex size-3.5 items-center justify-center border border-[#d0a236] bg-[#fbe18a]"><Svg w={9} h={8}><path d="M.5.500h8v7h-8zM3.500.500v7M3.500 5.500h5" stroke="#555" fill="#fff" /></Svg></button>
        <button aria-label="Slide sorter" className="ml-1"><Svg w={9} h={9}><path d="M.5.500h3v3h-3zM5.500.500h3v3h-3zM.5 5.500h3v3h-3zM5.500 5.500h3v3h-3z" stroke="#555" /></Svg></button>
        <button aria-label="Reading view" className="ml-[5px]"><Svg w={10} h={9}><path d="M5 2C3 .5 2 .5.500.500v7C2 7.500 3 7.500 5 9c2-1.500 3-1.500 4.500-1.500v-7C8 .5 7 .5 5 2zv6" stroke="#555" fill="#fff" /></Svg></button>
        <button aria-label="Slide show" className="ml-[5px]"><Svg w={9} h={9}><path d="M0 .5h9" stroke="#555" /><path d="M1 1h7v4H1z" fill="#aaa" stroke="#555" /><path d="M4.500 5v3M2.500 8.500h4" stroke="#555" /></Svg></button>
        <span className="ml-[9px] text-[8px]">69%</span>
        <button aria-label="Zoom out" className="ml-[7px]"><Svg w={12} h={12}><circle cx="6" cy="6" r="5.500" fill="#f8f8fa" stroke="#777" /><path d="M3 6h6" stroke="#555" strokeWidth="1.500" /></Svg></button>
        <span className="relative mx-px flex h-3 w-[76px] items-center">
          <i className="absolute left-[38px] h-1.5 w-px bg-[#888]" />
          <input type="range" aria-label="Zoom" min={10} max={400} defaultValue={145} className="relative h-3 w-full appearance-none bg-transparent [&::-webkit-slider-runnable-track]:h-px [&::-webkit-slider-runnable-track]:bg-[#888b94] [&::-webkit-slider-thumb]:-mt-1 [&::-webkit-slider-thumb]:h-[9px] [&::-webkit-slider-thumb]:w-[7px] [&::-webkit-slider-thumb]:appearance-none [&::-webkit-slider-thumb]:rounded-b-full [&::-webkit-slider-thumb]:border [&::-webkit-slider-thumb]:border-[#777] [&::-webkit-slider-thumb]:bg-[#f6f6f8]" />
        </span>
        <button aria-label="Zoom in"><Svg w={12} h={12}><circle cx="6" cy="6" r="5.500" fill="#f8f8fa" stroke="#777" /><path d="M3 6h6M6 3v6" stroke="#555" strokeWidth="1.500" /></Svg></button>
        <button aria-label="Fit slide" className="ml-[7px]"><Svg w={12} h={12}><rect x=".5" y=".5" width="11" height="11" rx="1" fill="#eee" stroke="#666" /><path d="M2.500 5V2.500H5M7 2.500h2.500V5M9.500 7v2.500H7M5 9.500H2.500V7M3 3l2 2M9 3L7 5M3 9l2-2M9 9L7 7" stroke="#555" /></Svg></button>
        <Svg w={10} h={10} className="ml-[6px] self-end"><path d="M8 1h1M8 4h1M5 4h1M8 7h1M5 7h1M2 7h1" stroke="#8c8f98" strokeWidth="1.500" /></Svg>
      </div>
    </footer>
  );
}

function SharedScreen() {
  return (
    <section aria-label="Shared screen" className="flex min-w-0 flex-1 flex-col overflow-hidden bg-white font-[Roboto,sans-serif]">
      <TitleRow />
      <TabRow />
      <Ribbon />
      <div className="flex h-[392px]">
        <SlidesPane />
        <Editor />
      </div>
      <StatusBar />
    </section>
  );
}

/* ---------- Windows taskbar ---------- */

function ChromeLogo() {
  return (
    <Svg w={24} h={24} vb="0 0 48 48">
      <circle cx="24" cy="24" r="23" fill="#fbc116" />
      <path d="M24 24L4.100 12.500A23 23 0 0 1 43.900 12.500z" fill="#e33b2e" />
      <path d="M24 13h19.900A23 23 0 0 0 4.100 12.500L14 30z" fill="#e33b2e" />
      <path d="M4.100 12.500A23 23 0 0 0 24 47l10-17.500L24 35 14.500 29.500z" fill="#2ba24c" />
      <circle cx="24" cy="24" r="11" fill="#fff" />
      <circle cx="24" cy="24" r="8.600" fill="#4285f4" />
    </Svg>
  );
}

function AppIcon({ label, active = false, running = false, children }: Kids & { label: string; active?: boolean; running?: boolean }) {
  return (
    <button aria-label={label} className="relative flex h-[46px] w-11 items-center justify-center">
      {active && <i className="absolute inset-y-[3px] left-0.5 right-0.5 rounded border border-[#333] bg-[#2a2a2a]" />}
      <span className="relative">{children}</span>
      {active && <i className="absolute bottom-[3px] h-[3px] w-4 rounded-full bg-[#6cc3e8]" />}
      {running && <i className="absolute bottom-[3px] h-[3px] w-1.5 rounded-full bg-[#9a9a9a]" />}
    </button>
  );
}

function TaskbarApps() {
  return (
    <div className="flex items-start">
      <AppIcon label="Start">
        <Svg w={24} h={24}>
          <defs><linearGradient id="win" x1="0" y1="0" x2="1" y2="1"><stop offset="0" stopColor="#7fdcff" /><stop offset="1" stopColor="#0a95f0" /></linearGradient></defs>
          <path d="M.5.500h11v11H.5zM12.500.500h11v11h-11zM.5 12.500h11v11H.5zM12.500 12.500h11v11h-11z" fill="url(#win)" />
        </Svg>
      </AppIcon>
      <label className="ml-[3px] mr-px mt-[7px] flex h-8 w-[220px] items-center rounded-full border border-[#4c4c4c] bg-[#3b3b3b] pl-[10px] pr-1.5">
        <Search size={16} color="#ddd" />
        <input type="search" aria-label="Search" placeholder="Search" className="ml-2.5 w-0 flex-1 bg-transparent text-[13px] outline-none placeholder:text-[#d0d0d0]" />
        <Svg w={20} h={20}>
          <path d="M10 0c6 0 10 4 10 9.500S16 19 10 19c-2 0-4 1-9 1 1-2 0-5 0-10C1 4 5 0 10 0z" fill="#1f7fe0" />
          <path d="M10 1.500c5 0 8.500 3.500 8.500 8s-3.500 8.500-8.500 8.500c-2 0-4 .5-7 .5.500-2-.5-4-.5-8.500 0-5 3.500-8.500 7.500-8.500z" fill="#e9f6ff" />
          <path d="M7 3.500l2.500 1V13l3-1.800-1.500-.7-1-2.300 5 1.800v2.700L9.500 16 7 14.500z" fill="#1671d6" />
        </Svg>
      </label>
      <AppIcon label="Chat">
        <Svg w={24} h={24}>
          <defs><linearGradient id="chat" x1="0" y1="0" x2="0" y2="1"><stop offset="0" stopColor="#9a93c9" /><stop offset="1" stopColor="#5a52c0" /></linearGradient></defs>
          <path d="M12 1a11 11 0 1 1-5 20.800L1 23l1.200-6A11 11 0 0 1 12 1z" fill="url(#chat)" />
          <rect x="5" y="7.500" width="9.500" height="9" rx="1.500" fill="#fff" /><path d="M15.500 11l3.500-2.500v7L15.500 13z" fill="#fff" />
        </Svg>
      </AppIcon>
      <AppIcon label="File Explorer">
        <Svg w={24} h={24}>
          <path d="M0 2.500Q0 1 1.500 1h6L10 4v3H0z" fill="#d99a1c" />
          <path d="M0 6h8l2.500-2.500H22q2 0 2 2V21q0 2-2 2H2q-2 0-2-2z" fill="#fbcb4b" />
          <path d="M4 23v-5q0-2.500 2.500-2.500h11Q20 15.500 20 18v5z" fill="#1f7fb8" /><path d="M7 19h10v4H7z" fill="#1a6494" />
        </Svg>
      </AppIcon>
      <AppIcon label="Figma">
        <span className="flex size-6 items-center justify-center rounded bg-[#262424]">
          <Svg w={12} h={18}>
            <path d="M6 0H3a3 3 0 0 0 0 6h3z" fill="#f24e1e" /><path d="M6 0h3a3 3 0 0 1 0 6H6z" fill="#ff7262" />
            <path d="M6 6H3a3 3 0 0 0 0 6h3z" fill="#a259ff" /><circle cx="9" cy="9" r="3" fill="#1abcfe" />
            <path d="M6 12H3a3 3 0 1 0 3 3z" fill="#0acf83" />
          </Svg>
        </span>
      </AppIcon>
      <AppIcon label="Edge">
        <Svg w={24} h={24}>
          <defs>
            <linearGradient id="edA" x1="0" y1="0" x2="1" y2=".3"><stop offset="0" stopColor="#2ba9e0" /><stop offset=".6" stopColor="#3cc9b0" /><stop offset="1" stopColor="#6fdc57" /></linearGradient>
            <linearGradient id="edB" x1="0" y1="0" x2="1" y2="1"><stop offset="0" stopColor="#1b9de2" /><stop offset="1" stopColor="#1457a0" /></linearGradient>
          </defs>
          <path d="M0 11C1 4 6 0 12 0c7 0 12 5 12 10 0 4-3 6-6 6-2.500 0-4-1-4-2s1-1.500 1-3c0-2-2-4-5-4-5 0-8 3-10 4z" fill="url(#edA)" />
          <path d="M0 11c1-3 5-5 9-4.500C6 8 5 11 5 13c0 6 5 10 10 10-7 3-15-2-15-12z" fill="url(#edB)" />
          <path d="M8.500 12c-1 6 4 9 8 8.500 3-.4 5-2 6-3.500-2 5-6 7-10 7-5 0-8-5-7.500-10 .3-3 2-5 4-6 1 0 1 1.500-.5 4z" fill="#1a76c4" />
        </Svg>
      </AppIcon>
      <AppIcon label="Word">
        <Svg w={24} h={22}>
          <path d="M6 0h16q2 0 2 2v4H6z" fill="#3fa2ea" /><path d="M6 5.500h18V11H6z" fill="#2b7cd3" /><path d="M6 11h18v5.500H6z" fill="#185abd" /><path d="M6 16.500h18V20q0 2-2 2H6z" fill="#103f91" />
          <rect x="0" y="5" width="12" height="12" rx="1" fill="#1b5ebe" />
          <text x="6" y="14" fontSize="9" fontWeight="700" fill="#fff" textAnchor="middle">W</text>
        </Svg>
      </AppIcon>
      <AppIcon label="Chrome"><ChromeLogo /></AppIcon>
      <AppIcon label="Zoom" active><ZoomLogo size={24} /></AppIcon>
      <AppIcon label="Chrome profile" running>
        <ChromeLogo />
        <span className="absolute -right-1 -top-1">
          <Svg w={16} h={16}><circle cx="8" cy="8" r="8" fill="#b3a88c" /><path d="M1 5h14M0 8h16" stroke="#8a7c5c" strokeWidth="1.500" /><circle cx="8" cy="9" r="2.500" fill="#332a20" /><path d="M3 14c1-4 9-4 10 0-3 2.500-7 2.500-10 0z" fill="#2b2620" /></Svg>
        </span>
      </AppIcon>
      <AppIcon label="Messages" running>
        <Svg w={24} h={24}>
          <path d="M10 2C4 2 0 6 0 11c0 3 1 5 3 7v4l4-2c8 0 10-3 10-9S15 2 10 2z" fill="#2bb6c4" stroke="#e8f6f6" />
          <path d="M15 3c5 0 8.500 3.500 8.500 8S20 19 17 19l-4 4v-4c-4-.5-6.500-4-6.500-8S10 3 15 3z" fill="#7cb94a" stroke="#f0f8ea" />
          <circle cx="11.500" cy="11" r="1.100" fill="#fff" /><circle cx="15" cy="11" r="1.100" fill="#fff" /><circle cx="18.500" cy="11" r="1.100" fill="#fff" />
        </Svg>
      </AppIcon>
    </div>
  );
}

function Tray() {
  return (
    <div className="flex items-center justify-end pb-0.5 pr-[19px] text-white">
      <button aria-label="Show hidden icons"><ChevronUp size={16} /></button>
      <button aria-label="OneDrive" className="ml-4">
        <Svg w={17} h={15}><path d="M4 11a3.500 3.500 0 0 1-.5-7C5 .5 9 0 11 3c3 0 4 2 4 4v4z" fill="#a9a9a9" /><path d="M5 11c0-4 5-6 9-5v5z" fill="#dedede" /><circle cx="12" cy="10" r="4.800" fill="#d9343b" /><path d="M10.300 8.300l3.400 3.400M13.700 8.300l-3.400 3.400" stroke="#fff" strokeWidth="1.300" /></Svg>
      </button>
      <button aria-label="Microphone in use" className="ml-[15px]"><Mic size={17} color="#7ccbe6" strokeWidth={1.6} /></button>
      <button aria-label="Network, volume and battery" className="ml-[15px] flex items-center gap-[7px]">
        <Wifi size={17} strokeWidth={2} />
        <Volume2 size={17} strokeWidth={1.6} />
        <Svg w={17} h={13}><path d="M5 3.500h8.500q1 0 1 1v6q0 1-1 1h-10q-1 0-1-1V8" stroke="#fff" strokeWidth="1.300" /><path d="M5.500 5.500h7v4h-8V8z" fill="#fff" /><path d="M15 6h1.500v3H15z" fill="#fff" /><path d="M4 0L0 5h2.500L1.500 8.500 6 3.500H3.500z" fill="#fff" /></Svg>
      </button>
      <button className="ml-3.5 text-right text-xs leading-4">9:20<br />26/08/2023</button>
      <button aria-label="Notifications snoozed" className="ml-2">
        <Svg w={15} h={16}><path d="M1 11.500l1.500-2V6a4.500 4.500 0 0 1 9-1.500v5l2 2v1H1zM5 13.500h5q-2.500 3-5 0z" fill="#fff" /><path d="M5 6h3.500L5 9.500h3.500" stroke="#202020" strokeWidth="1.100" /><circle cx="12" cy="3" r="3" fill="#202020" /><path d="M10.500 1h3l-3 3.500h3" stroke="#fff" strokeWidth="1.100" /></Svg>
      </button>
    </div>
  );
}

export default function App() {
  return (
    <div className="flex min-h-screen flex-col bg-[#1a1a1a] font-['Noto_Sans',sans-serif]">
      <header className="flex h-[23px] items-center bg-[#202020] text-white">
        <span className="pl-0.5"><ZoomLogo size={16} /></span>
        <span className="pl-1.5 text-xs">Zoom Meeting</span>
        <div className="ml-auto flex items-center gap-[33px] pr-[18px]">
          <button aria-label="Minimize"><Minus size={13} strokeWidth={2} /></button>
          <button aria-label="Restore"><Restore size={11} strokeWidth={2} className="-scale-x-100" /></button>
          <button aria-label="Close"><X size={15} strokeWidth={1.7} /></button>
        </div>
      </header>

      <main className="relative flex flex-1 items-center pb-0.5">
        <div className="pointer-events-none absolute inset-x-0 top-0 flex justify-center pr-14">
          <p role="status" className="flex h-12 items-center rounded-lg bg-[#232323] px-[17px] text-[11px] font-bold text-white">Vip Paramarta is talking...</p>
        </div>
        <div className="flex flex-1 items-center pl-1.5 pr-[108px]">
          <SharedScreen />
          <div className="pl-16"><Participants /></div>
        </div>
      </main>

      <div className="grid h-12 grid-cols-[1fr_auto_1fr] border-t border-[#444] bg-[#202020]">
        <button aria-label="Weather" className="flex items-center gap-2.5 pb-0.5 pl-5 text-left text-white">
          <Svg w={21} h={21}>
            <defs><linearGradient id="sun" x1=".2" y1="0" x2=".8" y2="1"><stop offset="0" stopColor="#f6b632" /><stop offset="1" stopColor="#ea6b12" /></linearGradient></defs>
            <circle cx="10.500" cy="10.500" r="10.300" fill="url(#sun)" />
          </Svg>
          <span className="text-[11px] leading-4">20°C<br /><span className="text-[#c8c8c8]">Cerah</span></span>
        </button>
        <TaskbarApps />
        <Tray />
      </div>
    </div>
  );
}
